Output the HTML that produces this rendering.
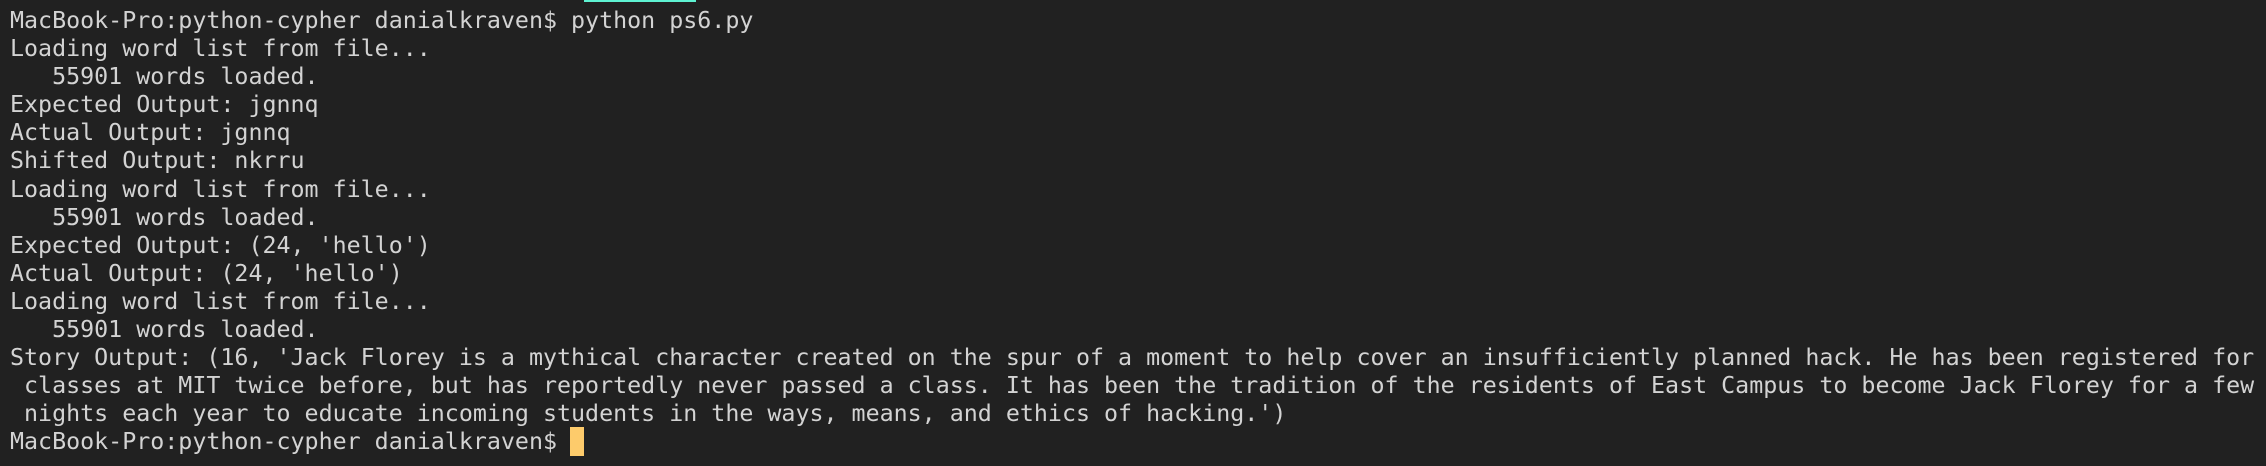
<!DOCTYPE html>
<html><head><meta charset="utf-8"><style>
html,body{margin:0;padding:0;background:#212121;width:2266px;height:466px;overflow:hidden}
.bar{position:absolute;left:584px;top:0;width:112px;height:2px;background:#5ef2d2}
pre{position:absolute;left:10px;top:7px;margin:0;font-family:"DejaVu Sans Mono","Liberation Mono",monospace;font-size:23.3px;line-height:28.1px;color:#d3d3d3;white-space:pre}
.cur{position:absolute;left:570px;top:427px;width:14px;height:29px;background:#fdcb6b}
</style></head><body>
<div class="bar"></div>
<pre>MacBook-Pro:python-cypher danialkraven$ python ps6.py
Loading word list from file...
   55901 words loaded.
Expected Output: jgnnq
Actual Output: jgnnq
Shifted Output: nkrru
Loading word list from file...
   55901 words loaded.
Expected Output: (24, 'hello')
Actual Output: (24, 'hello')
Loading word list from file...
   55901 words loaded.
Story Output: (16, 'Jack Florey is a mythical character created on the spur of a moment to help cover an insufficiently planned hack. He has been registered for
 classes at MIT twice before, but has reportedly never passed a class. It has been the tradition of the residents of East Campus to become Jack Florey for a few
 nights each year to educate incoming students in the ways, means, and ethics of hacking.')
MacBook-Pro:python-cypher danialkraven$ </pre>
<div class="cur"></div>
</body></html>
